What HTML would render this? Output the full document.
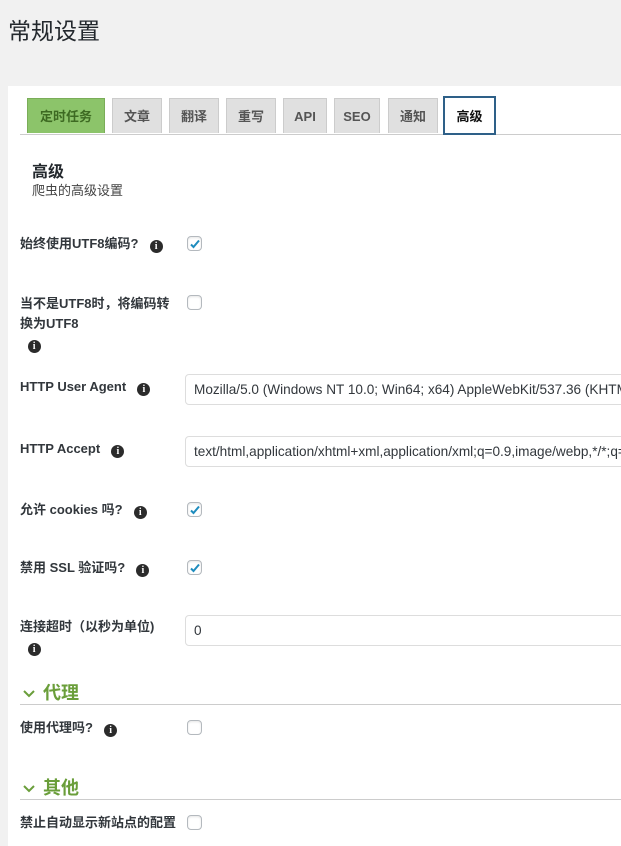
<!DOCTYPE html>
<html><head><meta charset="utf-8"><style>
body{margin:0;width:621px;height:832px;overflow:hidden;background:#f1f1f1;font-family:"Liberation Sans","Noto Sans CJK SC",sans-serif;color:#23282d;position:relative}
.a{position:absolute}
h1{position:absolute;left:8px;top:12px;margin:0;font-size:23px;font-weight:400;color:#23282d}
.panel{position:absolute;left:8px;top:86px;width:640px;height:760px;background:#fff}
.tab{position:absolute;top:98px;height:35px;background:#e0e0e0;border:1px solid #ccc;border-bottom:none;box-sizing:border-box;font-size:13px;font-weight:bold;color:#555;text-align:center;line-height:35px}
.line{position:absolute;left:20px;width:620px;height:1px;background:#ccc}
.lbl{position:absolute;left:20px;font-size:13px;font-weight:bold;color:#32373c;line-height:20px}
.i{display:inline-block;width:13px;height:13px;border-radius:50%;background:#2b2b2b;color:#fff;font-size:10px;line-height:13px;text-align:center;font-family:"Liberation Serif",serif;font-weight:bold;vertical-align:-1px;margin-left:4px}
.cb{position:absolute;left:187px;width:15px;height:15px;border:1px solid #b4b9be;border-radius:4px;box-sizing:border-box;background:#fff;box-shadow:inset 0 1px 2px rgba(0,0,0,.1)}
.cb svg{position:absolute;left:1px;top:1px}
.inp{position:absolute;left:185px;width:460px;height:31px;border:1px solid #ddd;border-radius:4px;box-sizing:border-box;font-size:13.6px;color:#32373c;line-height:29px;padding-left:8px;white-space:nowrap;overflow:hidden}
.sec{position:absolute;left:22px;font-size:18px;font-weight:bold;color:#6a9e3a}
</style></head><body>
<h1>常规设置</h1>
<div class="panel"></div>
<div class="line" style="top:134px"></div>
<div class="tab" style="left:27px;width:78px;background:#8cc46a;border-color:#7aad58;color:#3d6a22">定时任务</div>
<div class="tab" style="left:112px;width:50px">文章</div>
<div class="tab" style="left:169px;width:50px">翻译</div>
<div class="tab" style="left:226px;width:50px">重写</div>
<div class="tab" style="left:283px;width:44px">API</div>
<div class="tab" style="left:334px;width:46px">SEO</div>
<div class="tab" style="left:388px;width:50px">通知</div>
<div class="tab" style="left:443px;top:96px;width:53px;height:39px;background:#fff;border:2px solid #2e6088;color:#111;line-height:37px">高级</div>
<div class="a" style="left:32px;top:158px;font-size:16px;font-weight:bold">高级</div>
<div class="a" style="left:32px;top:180px;font-size:13px;color:#444">爬虫的高级设置</div>

<div class="lbl" style="top:234px">始终使用UTF8编码? &nbsp;<span class="i">i</span></div>
<div class="cb" style="top:236px"><svg width="12" height="12" viewBox="0 0 12 12"><path d="M2 6.5l2.5 2.5L10 2.5" stroke="#1e8cbe" stroke-width="2" fill="none"/></svg></div>
<div class="lbl" style="top:294px;width:150px">当不是UTF8时，将编码转换为UTF8<br>&nbsp;<span class="i">i</span></div>
<div class="cb" style="top:295px"></div>

<div class="lbl" style="top:377px">HTTP User Agent &nbsp;<span class="i">i</span></div>
<div class="inp" style="top:374px">Mozilla/5.0 (Windows NT 10.0; Win64; x64) AppleWebKit/537.36 (KHTML, like Gecko)</div>
<div class="lbl" style="top:439px">HTTP Accept &nbsp;<span class="i">i</span></div>
<div class="inp" style="top:436px">text/html,application/xhtml+xml,application/xml;q=0.9,image/webp,*/*;q=0.8</div>

<div class="lbl" style="top:500px">允许 cookies 吗? &nbsp;<span class="i">i</span></div>
<div class="cb" style="top:502px"><svg width="12" height="12" viewBox="0 0 12 12"><path d="M2 6.5l2.5 2.5L10 2.5" stroke="#1e8cbe" stroke-width="2" fill="none"/></svg></div>
<div class="lbl" style="top:558px">禁用 SSL 验证吗? &nbsp;<span class="i">i</span></div>
<div class="cb" style="top:560px"><svg width="12" height="12" viewBox="0 0 12 12"><path d="M2 6.5l2.5 2.5L10 2.5" stroke="#1e8cbe" stroke-width="2" fill="none"/></svg></div>

<div class="lbl" style="top:617px">连接超时（以秒为单位)<br>&nbsp;<span class="i">i</span></div>
<div class="inp" style="top:615px">0</div>

<div class="sec" style="top:679px"><svg width="14" height="10" viewBox="0 0 14 10" style="margin-right:7px"><path d="M2 2l5 5 5-5" stroke="#6a9e3a" stroke-width="2" fill="none"/></svg>代理</div>
<div class="line" style="top:704px"></div>
<div class="lbl" style="top:718px">使用代理吗? &nbsp;<span class="i">i</span></div>
<div class="cb" style="top:720px"></div>

<div class="sec" style="top:774px"><svg width="14" height="10" viewBox="0 0 14 10" style="margin-right:7px"><path d="M2 2l5 5 5-5" stroke="#6a9e3a" stroke-width="2" fill="none"/></svg>其他</div>
<div class="line" style="top:799px"></div>
<div class="lbl" style="top:813px">禁止自动显示新站点的配置</div>
<div class="cb" style="top:815px"></div>
</body></html>
